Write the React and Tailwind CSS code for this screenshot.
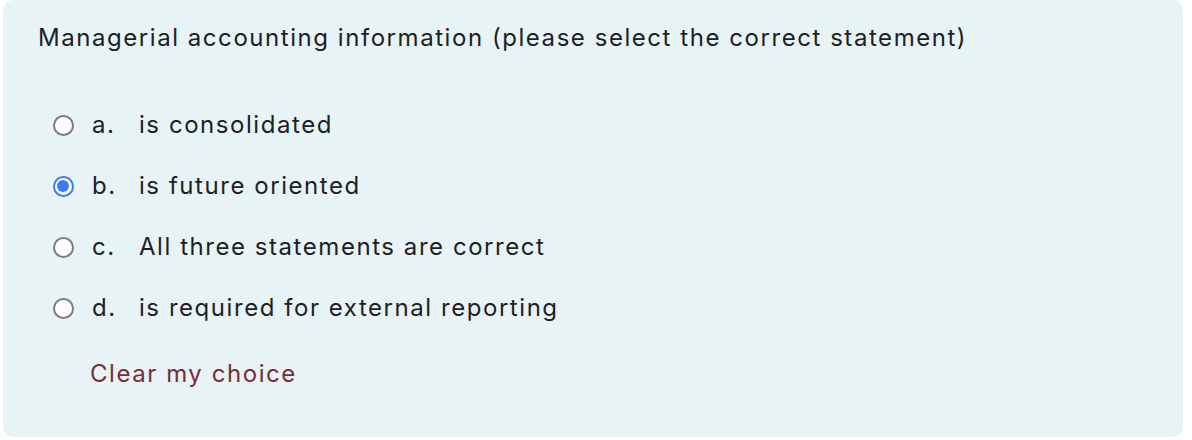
import { useState } from 'react';

const options = [
  { key: 'a', text: 'is consolidated' },
  { key: 'b', text: 'is future oriented' },
  { key: 'c', text: 'All three statements are correct' },
  { key: 'd', text: 'is required for external reporting' },
];

const Radio = ({ checked }) =>
  checked ? (
    <span className="flex h-[21px] w-[21px] items-center justify-center rounded-full border-2 border-[#3b7cf4] bg-white">
      <span className="h-[12px] w-[12px] rounded-full bg-[#3b7cf4]" />
    </span>
  ) : (
    <span className="h-[21px] w-[21px] rounded-full border-2 border-[#7c7c7c] bg-white" />
  );

export default function App() {
  const [choice, setChoice] = useState('b');

  return (
    <div className="h-[440px] bg-white pl-[3px] pr-[9px] pb-[3px]" style={{ fontFamily: 'Inter, "Liberation Sans", sans-serif' }}>
      <div className="h-full rounded-[10px] bg-[#e7f3f5] pl-[35px] pt-[22px] text-[24px] tracking-[1.55px] text-[#1d2125]">
        <p className="whitespace-nowrap leading-[32px]">
          Managerial accounting information (please select the correct statement)
        </p>

        <div className="mt-[55px] flex flex-col gap-[29px] pl-[11px]">
          {options.map((o) => (
            <label
              key={o.key}
              className="flex h-[32px] cursor-pointer items-center"
              onClick={() => setChoice(o.key)}
            >
              <span className="flex w-[28px] justify-center">
                <Radio checked={choice === o.key} />
              </span>
              <span className="ml-[15px] w-[47px]">{o.key}.</span>
              <span>{o.text}</span>
            </label>
          ))}
        </div>

        <button
          className="mt-[34px] ml-[52px] leading-[32px] text-[#7b2c36]"
          onClick={() => setChoice(null)}
        >
          Clear my choice
        </button>
      </div>
    </div>
  );
}
